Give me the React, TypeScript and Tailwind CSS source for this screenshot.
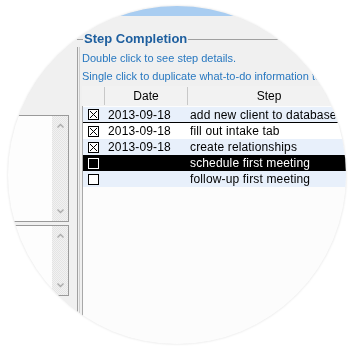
import React from 'react';

type Step = { done: boolean; date: string; name: string };

const steps: Step[] = [
  { done: true, date: '2013-09-18', name: 'add new client to database' },
  { done: true, date: '2013-09-18', name: 'fill out intake tab' },
  { done: true, date: '2013-09-18', name: 'create relationships' },
  { done: false, date: '', name: 'schedule first meeting' },
  { done: false, date: '', name: 'follow-up first meeting' },
];

function CheckBox({ checked, inverted }: { checked: boolean; inverted?: boolean }) {
  const stroke = inverted ? '#ffffff' : '#000000';
  return (
    <svg width="11" height="11" viewBox="0 0 11 11" shapeRendering="crispEdges">
      <rect x="0.5" y="0.5" width="10" height="10" fill={inverted ? '#000' : '#fff'} stroke={stroke} />
      {checked && (
        <path d="M2 2L9 9M9 2L2 9" stroke={stroke} strokeWidth="1" shapeRendering="auto" />
      )}
    </svg>
  );
}

function Chevron({ up }: { up?: boolean }) {
  return (
    <svg width="7" height="5" viewBox="0 0 7 5">
      <path d={up ? 'M0.5 4.5L3.5 1.5L6.5 4.5' : 'M0.5 0.5L3.5 3.5L6.5 0.5'} fill="none" stroke="#a8a8a8" strokeWidth="1.3" />
    </svg>
  );
}

function ScrollBox({ height }: { height: string }) {
  return (
    <div className={`flex ${height} border-y border-r border-[#9a9a9a] bg-[#fdfdfd]`}>
      <div className="flex-1" />
      <div className="w-4 flex flex-col items-center justify-between py-[7px] bg-[#ececec] bg-[repeating-conic-gradient(#f2f2f2_0_25%,#e4e4e4_0_50%)] bg-[length:2px_2px]">
        <Chevron up />
        <Chevron />
      </div>
    </div>
  );
}

export default function App() {
  return (
    <div className="w-[352px] h-[350px] bg-white [font-family:'Liberation_Sans',Arial,sans-serif]">
      <div className="[filter:drop-shadow(0_0_1px_rgba(0,0,0,0.12))]">
        <div className="w-[352px] h-[350px] bg-[#f0f0f0] [clip-path:circle(169px_at_177px_175px)] flex flex-col">
          {/* title bar edge */}
          <div className="h-4 bg-[#a9cdf1]" />

          <div className="flex flex-1">
            {/* left panel */}
            <div className="w-[77px] flex flex-col pt-[99px] pr-2">
              <ScrollBox height="h-[107px]" />
              <div className="h-[3px]" />
              <ScrollBox height="h-[71px]" />
            </div>

            {/* group box */}
            <div className="flex-1 flex flex-col pt-[15px]">
              <div className="flex items-center h-4">
                <div className="w-[6px] border-t border-[#a0a0a0]" />
                <span className="px-[1px] text-[13px] leading-4 font-bold text-[#1d5e9e]">Step Completion</span>
                <div className="flex-1 border-t border-[#a0a0a0]" />
              </div>
              <div className="flex-1 flex border-l border-[#a0a0a0]">
                <div className="w-[2px] border-r border-[#d0d0d0]" />
                <div className="flex-1 flex flex-col pl-[2px] -mt-[8px]">
                  <div className="pt-[10px] text-[11px] leading-[13px] text-[#2878c0] whitespace-nowrap">
                    <div className="h-[18px] pt-[3px]">Double click to see step details.</div>
                    <div className="h-[17px] pt-[3px]">Single click to duplicate what-to-do information to</div>
                  </div>

                  {/* list */}
                  <div className="flex flex-col flex-1 mt-[2px]">
                    <div className="flex h-[20px] text-[12px] text-black bg-[#f2f2f2]">
                      <div className="w-[23px] border-r border-[#c8c8c8] my-[1px]" />
                      <div className="w-[83px] border-r border-[#c8c8c8] my-[1px] flex items-center justify-center">Date</div>
                      <div className="w-[162px] flex items-center justify-center">Step</div>
                    </div>
                    <div className="flex-1 flex flex-col border-l border-[#a8a8a8] bg-[#fcfcfc] pt-[1px]">
                      {steps.map((s, i) => {
                        const selected = i === 3;
                        const bg = selected ? 'bg-black text-white' : i % 2 === 0 ? 'bg-[#e8f0fb] text-black' : 'bg-white text-black';
                        return (
                          <div
                            key={i}
                            className={`flex items-center h-4 text-[12px] tracking-[0.15px] whitespace-nowrap ${bg} ${i === 0 ? 'border-b border-black' : ''}`}
                          >
                            <div className="w-[25px] pl-[5px] flex items-center">
                              <CheckBox checked={s.done} inverted={selected} />
                            </div>
                            <div className="w-[82px]">{s.date}</div>
                            <div>{s.name}</div>
                          </div>
                        );
                      })}
                    </div>
                  </div>
                </div>
              </div>
            </div>
          </div>
        </div>
      </div>
    </div>
  );
}
